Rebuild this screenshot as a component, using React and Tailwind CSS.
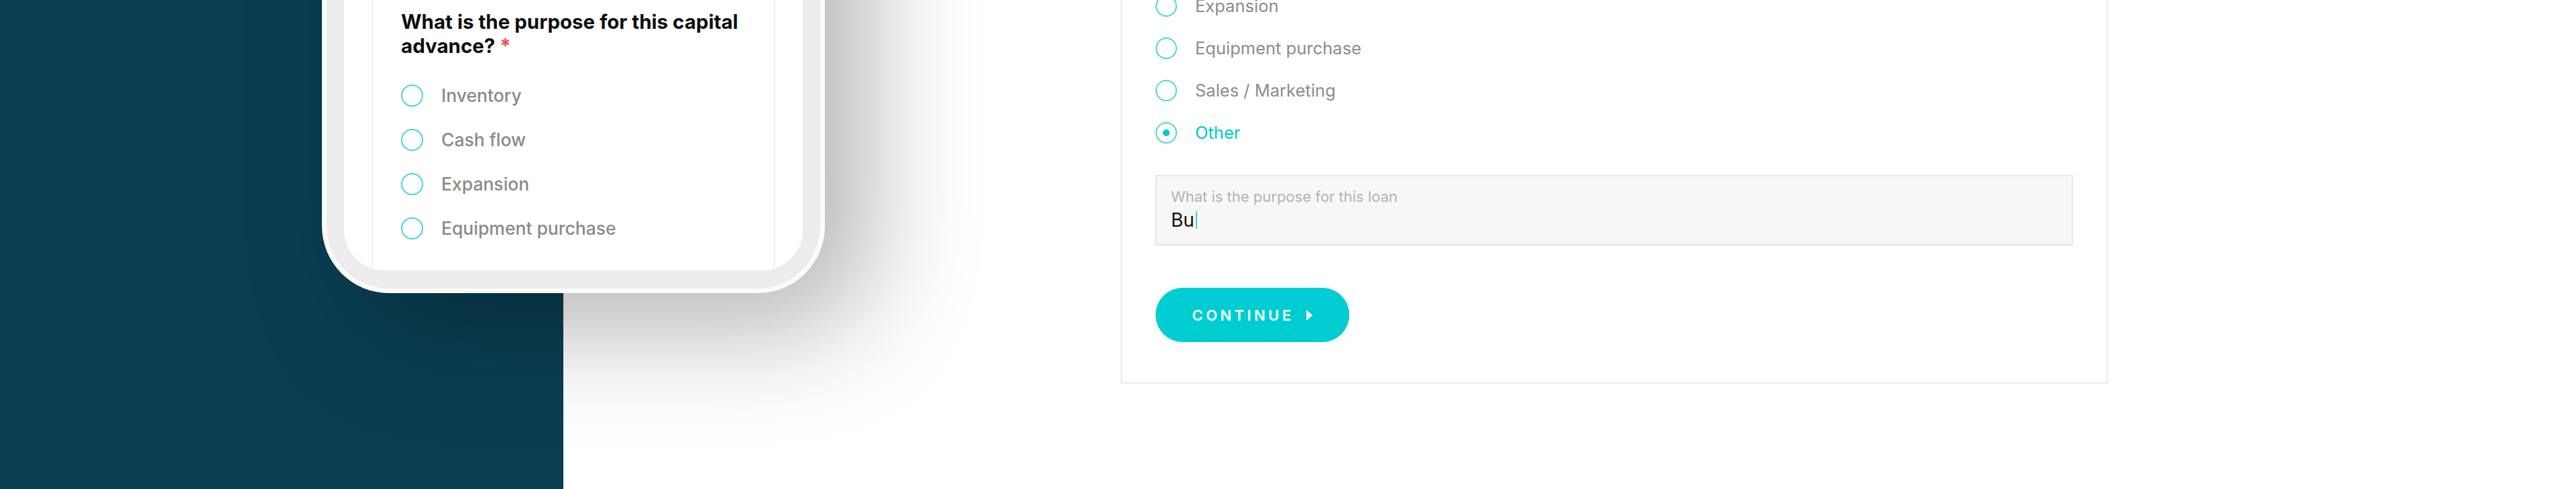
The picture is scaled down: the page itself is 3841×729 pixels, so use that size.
const phoneOptions = ['Inventory', 'Cash flow', 'Expansion', 'Equipment purchase'];

const loanOptions = [
  { label: 'Expansion' },
  { label: 'Equipment purchase' },
  { label: 'Sales / Marketing' },
  { label: 'Other', checked: true },
];

function PhoneOption({ label }) {
  return (
    <div className="flex h-[33px] items-center gap-[27px]">
      <span className="h-[33px] w-[33px] shrink-0 rounded-full border-2 border-[#4fd3dc]" />
      <span className="text-[26.5px] leading-[33px] font-medium text-[#8a8a8a]">{label}</span>
    </div>
  );
}

function LoanOption({ label, checked }) {
  return (
    <div className="flex h-[32px] items-center gap-[27px]">
      <span className="flex h-[32px] w-[32px] shrink-0 items-center justify-center rounded-full border-2 border-[#4fd3dc]">
        {checked && <span className="h-[10px] w-[10px] rounded-full bg-[#00c8d0]" />}
      </span>
      <span className={`text-[25.5px] leading-[32px] ${checked ? 'text-[#00c8d0]' : 'text-[#8c8c8c]'}`}>
        {label}
      </span>
    </div>
  );
}

export default function App() {
  return (
    <div className="relative flex h-[729px] w-[3841px] items-start overflow-hidden bg-white font-['Inter','Noto_Sans',sans-serif]">
      {/* Left brand panel */}
      <div className="h-full w-[840px] shrink-0 bg-[#0a3f53]" />

      {/* Phone mockup */}
      <div className="absolute left-[480px] top-[-300px] h-[737px] w-[750px] rounded-[100px] bg-[#fbfbfb] p-[7px] shadow-[60px_50px_170px_rgba(0,0,0,0.3)]">
        <div className="h-full rounded-[93px] bg-[#ececec] p-[26px] pb-[27px]">
          <div className="flex h-full justify-center overflow-hidden rounded-[60px] bg-white">
            <div className="flex h-full w-[600px] flex-col justify-end border-x border-[#e3e3e3] pb-[46px] pl-[42px] pr-[42px]">
              <h2 className="text-[29.5px] leading-[36px] font-bold text-[#0d0d0d]">
                What is the purpose for this capital advance? <span className="text-[#f04e4e]">*</span>
              </h2>
              <div className="mt-[40px] flex flex-col gap-[33px]">
                {phoneOptions.map((o) => (
                  <PhoneOption key={o} label={o} />
                ))}
              </div>
            </div>
          </div>
        </div>
      </div>

      {/* Loan purpose form */}
      <div className="-mt-[61px] ml-[831px] w-[1472px] shrink-0 border-2 border-[#ebebeb] bg-white px-[50px] pt-[52px] pb-[60px]">
        <div className="flex flex-col gap-[31px]">
          {loanOptions.map((o) => (
            <LoanOption key={o.label} label={o.label} checked={o.checked} />
          ))}
        </div>

        <div className="mt-[47px] h-[105px] border-2 border-[#e6e6e6] bg-[#f7f7f7] px-[21px] pt-[17px]">
          <div className="text-[22px] leading-[26px] text-[#b3b3b3]">What is the purpose for this loan</div>
          <div className="mt-[6px] flex items-center text-[28px] leading-[32px] text-[#111111]">
            Bu
            <span className="ml-[2px] inline-block h-[26px] w-[2px] bg-[#3fd0d8]" />
          </div>
        </div>

        <button className="mt-[63px] flex h-[81px] w-[289px] items-center justify-center gap-[19px] rounded-full bg-[#00cdd2] text-white">
          <span className="text-[22px] leading-none font-semibold tracking-[0.2em]">CONTINUE</span>
          <svg width="9" height="16" viewBox="0 0 9 16">
            <path d="M0 0L9 8L0 16Z" fill="white" />
          </svg>
        </button>
      </div>
    </div>
  );
}
